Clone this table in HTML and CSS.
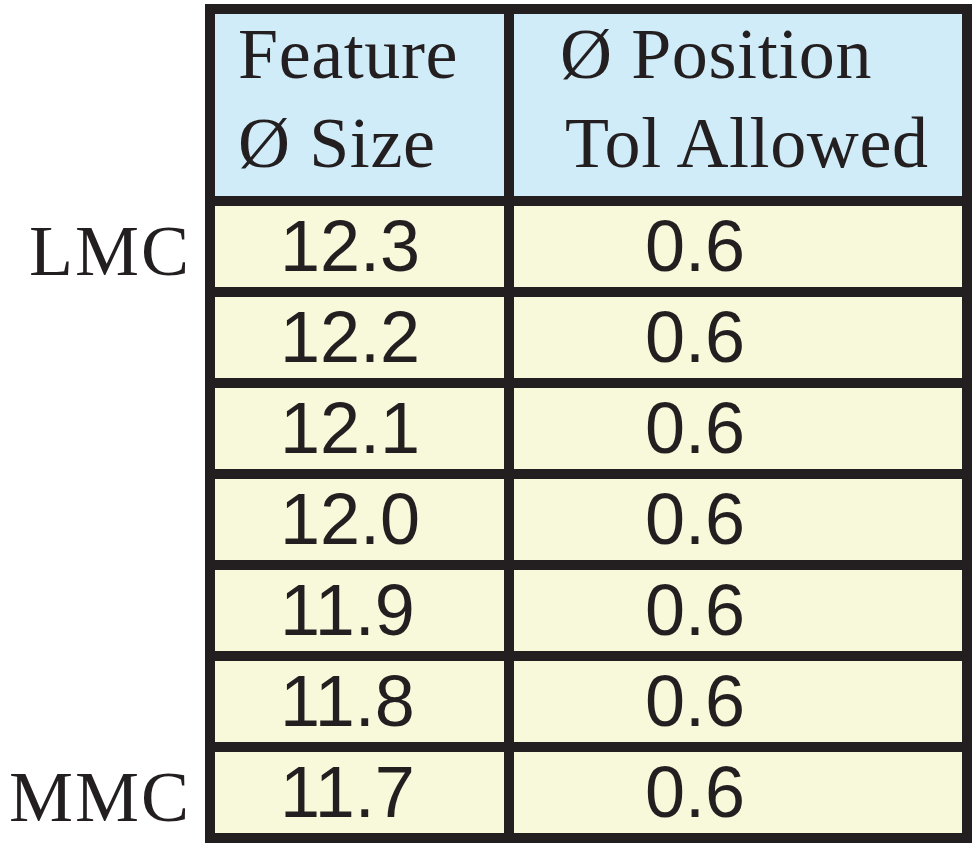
FILE: index.html
```html
<!DOCTYPE html>
<html lang="en">
<head>
    <meta charset="UTF-8">
    <meta name="viewport" content="width=device-width, initial-scale=1.0">
    <title>Feature Size vs Position Tolerance</title>
    <link rel="stylesheet" href="styles.css">
</head>
<body>
    <table class="tol-table">
        <colgroup>
            <col class="col-label">
            <col class="col-size">
            <col class="col-tol">
        </colgroup>
        <thead>
            <tr>
                <th class="label"></th>
                <th class="head size">
                    <span class="line">Feature</span>
                    <span class="line">Ø Size</span>
                </th>
                <th class="head tol">
                    <span class="line">Ø Position</span>
                    <span class="line indent">Tol Allowed</span>
                </th>
            </tr>
        </thead>
        <tbody>
            <tr>
                <th class="label">LMC</th>
                <td class="size">12.3</td>
                <td class="tol">0.6</td>
            </tr>
            <tr>
                <th class="label"></th>
                <td class="size">12.2</td>
                <td class="tol">0.6</td>
            </tr>
            <tr>
                <th class="label"></th>
                <td class="size">12.1</td>
                <td class="tol">0.6</td>
            </tr>
            <tr>
                <th class="label"></th>
                <td class="size">12.0</td>
                <td class="tol">0.6</td>
            </tr>
            <tr>
                <th class="label"></th>
                <td class="size">11.9</td>
                <td class="tol">0.6</td>
            </tr>
            <tr>
                <th class="label"></th>
                <td class="size">11.8</td>
                <td class="tol">0.6</td>
            </tr>
            <tr>
                <th class="label">MMC</th>
                <td class="size">11.7</td>
                <td class="tol">0.6</td>
            </tr>
        </tbody>
    </table>
</body>
</html>
```

FILE: styles.css
```css
body {
    margin: 0;
    padding: 4px 0 0 0;
    background: #ffffff;
    color: #231f20;
}
.tol-table {
    table-layout: fixed;
    width: 972px;
    border-collapse: separate;
    border-spacing: 0;
}
.col-label {
    width: 205px;
}
.col-size {
    width: 309px;
}
.col-tol {
    width: 458px;
}
.tol-table th,
.tol-table td {
    padding: 0;
    font-weight: normal;
    text-align: left;
    white-space: nowrap;
}
.label {
    font-family: "Liberation Serif", "Times New Roman", serif;
    font-size: 72px;
    line-height: 81px;
    letter-spacing: 2px;
    text-align: right !important;
    padding-right: 14px !important;
    vertical-align: middle;
}
.head {
    font-family: "Liberation Serif", "Times New Roman", serif;
    font-size: 72px;
    letter-spacing: 0.6px;
    background: #d1ecf9;
    border-top: 10px solid #231f20;
    border-bottom: 10px solid #231f20;
    vertical-align: top;
    padding-bottom: 13px !important;
}
.head .line {
    display: block;
    line-height: 80px;
}
.head .line + .line {
    margin-top: 9px;
}
.head .indent {
    padding-left: 5px;
}
.head.size {
    padding-left: 23px !important;
}
.head.tol {
    padding-left: 46px !important;
}
tbody td {
    font-family: "Liberation Sans", Arial, sans-serif;
    font-size: 72px;
    line-height: 81px;
    background: #f8f8da;
    border-bottom: 10px solid #231f20;
}
.size {
    border-left: 10px solid #231f20;
    border-right: 10px solid #231f20;
}
.tol {
    border-right: 10px solid #231f20;
}
tbody td.size {
    padding-left: 65px !important;
}
tbody td.tol {
    padding-left: 131px !important;
}
```
